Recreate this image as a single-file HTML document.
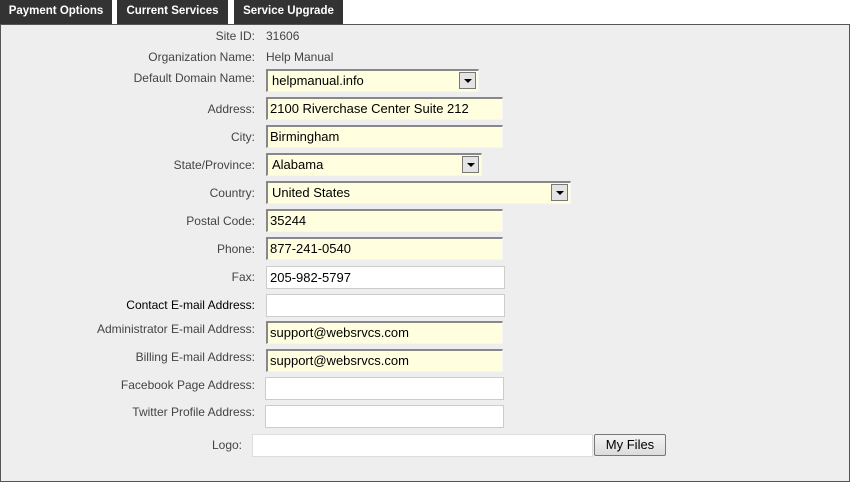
<!DOCTYPE html>
<html><head><style>
body{margin:0;width:850px;height:482px;background:#fff;font-family:"Liberation Sans",Arial,sans-serif;font-size:12px;position:relative;overflow:hidden}
.tab{position:absolute;top:0;height:24px;background:#333;color:#fff;font-weight:bold;font-size:11.5px;line-height:23px;text-align:center}
.panel{position:absolute;left:0;top:24px;width:848px;height:456px;border:1px solid #555;background:#eee}
.l{position:absolute;right:595px;color:#444;font-size:12px;text-align:right;white-space:nowrap}
.v{position:absolute;left:266px;color:#444;font-size:12px}
.in{position:absolute;box-sizing:border-box;height:23px;background:#ffffe0;border-top:2px solid #888;border-left:2px solid #888;border-right:1px solid #f6f6f6;border-bottom:1px solid #f6f6f6;font-size:13px;color:#000;padding-left:2px;line-height:19px;white-space:nowrap}
.w{background:#fff;border:1px solid #ccc;padding-left:3px;line-height:21px}
.sel{padding-left:4px}
.arr{position:absolute;right:2px;top:1px;width:15px;height:15px;border:1px solid #777;background:#e4e4e4}
.arr:after{content:"";position:absolute;left:4px;top:6px;border-left:4px solid transparent;border-right:4px solid transparent;border-top:4px solid #000}
.btn{position:absolute;left:594px;top:434px;width:72px;height:22px;box-sizing:border-box;border:1px solid #777;border-radius:2px;background:linear-gradient(#f4f4f4,#dcdcdc);font-size:13px;text-align:center;line-height:20px;color:#000}
</style></head><body>
<div class="tab" style="left:0;width:112px">Payment Options</div>
<div class="tab" style="left:117px;width:111px">Current Services</div>
<div class="tab" style="left:234px;width:109px">Service Upgrade</div>
<div class="panel"></div>

<div class="l" style="top:29px">Site ID:</div><div class="v" style="top:29px">31606</div>
<div class="l" style="top:50px">Organization Name:</div><div class="v" style="top:50px">Help Manual</div>
<div class="l" style="top:71px">Default Domain Name:</div>
<div class="in sel" style="left:266px;top:69px;width:213px;">helpmanual.info<div class="arr"></div></div>
<div class="l" style="top:102px">Address:</div>
<div class="in" style="left:266px;top:97px;width:237px">2100 Riverchase Center Suite 212</div>
<div class="l" style="top:130px">City:</div>
<div class="in" style="left:266px;top:125px;width:237px">Birmingham</div>
<div class="l" style="top:158px">State/Province:</div>
<div class="in sel" style="left:266px;top:153px;width:216px">Alabama<div class="arr"></div></div>
<div class="l" style="top:186px">Country:</div>
<div class="in sel" style="left:266px;top:181px;width:305px">United States<div class="arr"></div></div>
<div class="l" style="top:214px">Postal Code:</div>
<div class="in" style="left:266px;top:209px;width:237px">35244</div>
<div class="l" style="top:242px">Phone:</div>
<div class="in" style="left:266px;top:237px;width:237px">877-241-0540</div>
<div class="l" style="top:270px">Fax:</div>
<div class="in w" style="left:266px;top:266px;width:239px">205-982-5797</div>
<div class="l" style="top:298px;color:#000">Contact E-mail Address:</div>
<div class="in w" style="left:266px;top:294px;width:239px"></div>
<div class="l" style="top:322px">Administrator E-mail Address:</div>
<div class="in" style="left:266px;top:321px;width:237px">support@websrvcs.com</div>
<div class="l" style="top:350px">Billing E-mail Address:</div>
<div class="in" style="left:266px;top:349px;width:237px">support@websrvcs.com</div>
<div class="l" style="top:378px">Facebook Page Address:</div>
<div class="in w" style="left:265px;top:377px;width:239px"></div>
<div class="l" style="top:405px">Twitter Profile Address:</div>
<div class="in w" style="left:265px;top:405px;width:239px"></div>
<div class="l" style="top:438px;right:608px">Logo:</div>
<div class="in w" style="left:252px;top:434px;width:341px;border-color:#ddd"></div>
<div class="btn">My Files</div>
</body></html>
